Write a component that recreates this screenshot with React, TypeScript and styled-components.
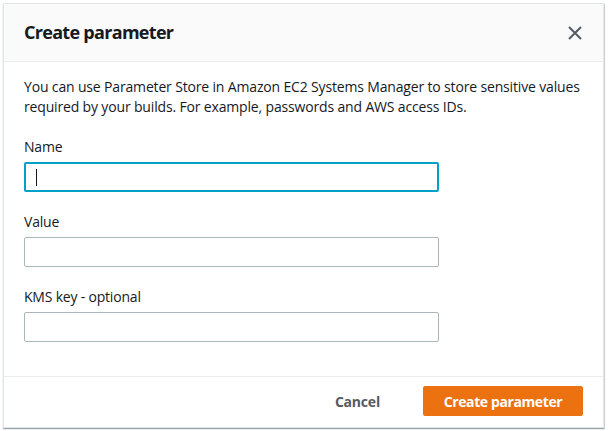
import React from "react";
import styled, { createGlobalStyle } from "styled-components";

const Global = createGlobalStyle`
  html, body { margin: 0; padding: 0; background: #ffffff; }
  body { font-family: "Open Sans", "Noto Sans", Arial, sans-serif; color: #16191f; }
  * { box-sizing: border-box; }
`;

const Page = styled.div`
  width: 608px;
  height: 431px;
  padding: 3px 0 0 3px;
  background: #fff;
`;

const Modal = styled.div`
  width: 601px;
  height: 425px;
  border: 1px solid #e4e7e7;
  background: #fff;
  box-shadow: 0 1px 1px 0 rgba(0, 28, 36, 0.3), 1px 1px 1px 0 rgba(0, 28, 36, 0.15);
  display: flex;
  flex-direction: column;
`;

const Header = styled.div`
  height: 58px;
  background: #fafafa;
  border-bottom: 1px solid #eaeded;
  display: flex;
  align-items: center;
  justify-content: space-between;
  padding: 0 18px 0 20px;
`;

const Title = styled.h2`
  margin: 0;
  font-size: 18px;
  font-weight: 700;
  color: #16191f;
  letter-spacing: -0.7px;
  padding-bottom: 2px;
`;

const Close = styled.button`
  border: none;
  background: none;
  padding: 0;
  width: 20px;
  height: 20px;
  display: flex;
  align-items: center;
  justify-content: center;
  color: #545b64;
  cursor: pointer;
`;

const Body = styled.div`
  flex: 1;
  padding: 15px 20px 0 20px;
  display: flex;
  flex-direction: column;
`;

const Intro = styled.p`
  margin: 0 0 20px 0;
  font-size: 14px;
  line-height: 20px;
  color: #16191f;
  letter-spacing: -0.16px;
`;

const Field = styled.div`
  display: flex;
  flex-direction: column;
  margin-bottom: 20px;
`;

const Label = styled.label`
  font-size: 14px;
  line-height: 20px;
  color: #16191f;
  margin-bottom: 5px;
  letter-spacing: -0.2px;
`;

const Input = styled.div<{ $focused?: boolean }>`
  width: 415px;
  height: 30px;
  border-radius: 2px;
  border: ${(p) => (p.$focused ? "2px solid #00a1c9" : "1px solid #aab7b8")};
  background: #fff;
  display: flex;
  align-items: center;
  padding-left: ${(p) => (p.$focused ? "10px" : "11px")};
`;

const Caret = styled.span`
  width: 1px;
  height: 17px;
  background: #16191f;
`;

const Footer = styled.div`
  height: 51px;
  border-top: 1px solid #eaeded;
  display: flex;
  align-items: center;
  justify-content: flex-end;
  padding: 0 20px 2px 20px;
  gap: 8px;
`;

const LinkButton = styled.button`
  border: none;
  background: none;
  font-family: inherit;
  font-size: 14px;
  font-weight: 700;
  color: #545b64;
  padding: 0 35px 0 20px;
  height: 30px;
  letter-spacing: -0.2px;
`;

const Primary = styled.button`
  border: 1px solid #ec7211;
  background: #ec7211;
  color: #fff;
  font-family: inherit;
  font-size: 14px;
  font-weight: 700;
  height: 30px;
  width: 160px;
  border-radius: 2px;
  letter-spacing: -0.4px;
`;

export default function App() {
  return (
    <Page>
      <Global />
      <Modal>
        <Header>
          <Title>Create parameter</Title>
          <Close aria-label="Close">
            <svg width="16" height="16" viewBox="0 0 16 16">
              <path d="M2 2 L14 14 M14 2 L2 14" stroke="currentColor" strokeWidth="2" fill="none" />
            </svg>
          </Close>
        </Header>
        <Body>
          <Intro>
            You can use Parameter Store in Amazon EC2 Systems Manager to store sensitive values
            required by your builds. For example, passwords and AWS access IDs.
          </Intro>
          <Field>
            <Label>Name</Label>
            <Input $focused>
              <Caret />
            </Input>
          </Field>
          <Field>
            <Label>Value</Label>
            <Input />
          </Field>
          <Field>
            <Label>KMS key - optional</Label>
            <Input />
          </Field>
        </Body>
        <Footer>
          <LinkButton>Cancel</LinkButton>
          <Primary>Create parameter</Primary>
        </Footer>
      </Modal>
    </Page>
  );
}
